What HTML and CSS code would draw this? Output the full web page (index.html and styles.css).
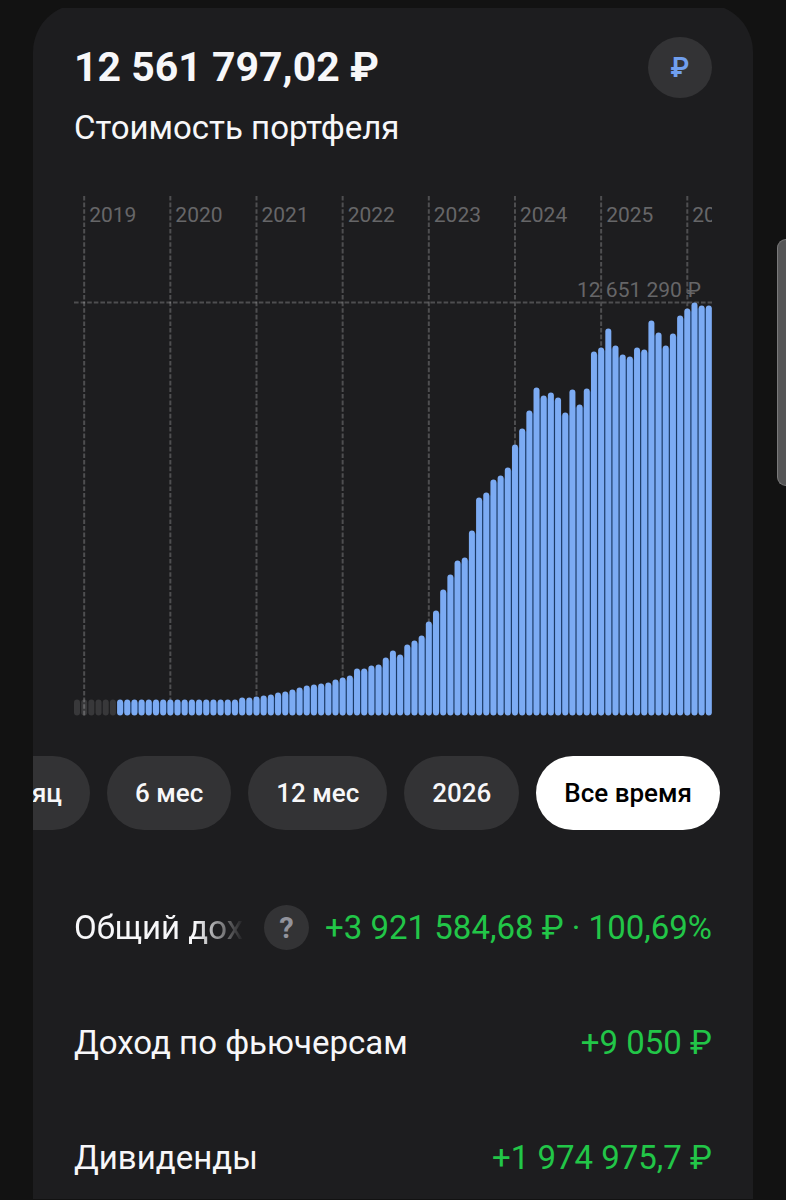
FILE: index.html
```
<!DOCTYPE html>
<html lang="ru">
<head>
    <meta charset="UTF-8">
    <meta name="viewport" content="width=device-width, initial-scale=1.0">
    <title>Стоимость портфеля</title>
    <link rel="stylesheet" href="styles.css">
</head>
<body>
    <div class="page">
        <main class="card">
            <header class="header">
                <h1 class="total">12 561 797,02 ₽</h1>
                <button class="currency" type="button" aria-label="Валюта">₽</button>
            </header>
            <p class="subtitle">Стоимость портфеля</p>

            <svg class="chart" id="chart" viewBox="0 0 638 520" role="img" aria-label="Стоимость портфеля"></svg>

            <div class="periods">
                <button class="period" type="button">Месяц</button>
                <button class="period" type="button">6 мес</button>
                <button class="period" type="button">12 мес</button>
                <button class="period" type="button">2026</button>
                <button class="period active" type="button">Все время</button>
            </div>

            <dl class="stats">
                <div class="row">
                    <dt class="label fade">Общий доход</dt>
                    <dd class="value">
                        <button class="help" type="button" aria-label="Подсказка">?</button>
                        <span>+3 921 584,68 ₽ · 100,69%</span>
                    </dd>
                </div>
                <div class="row">
                    <dt class="label">Доход по фьючерсам</dt>
                    <dd class="value">+9 050 ₽</dd>
                </div>
                <div class="row">
                    <dt class="label">Дивиденды</dt>
                    <dd class="value">+1 974 975,7 ₽</dd>
                </div>
            </dl>
        </main>
    </div>
    <div class="edge-handle"></div>
    <script src="chart.js"></script>
</body>
</html>
```
FILE: styles.css
```
* {
    box-sizing: border-box;
}
body {
    margin: 0;
    background-color: #121212;
    color: #f7f7f9;
    font-family: Roboto, Arial, sans-serif;
}
button {
    border: none;
    padding: 0;
    font-family: inherit;
    cursor: pointer;
}
.page {
    margin: 8px 33px 0;
    overflow: hidden;
}
.card {
    margin-top: -4px;
    padding: 33px 41px 19px;
    background-color: #1d1d1f;
    border-radius: 48px 48px 0 0;
}
.header {
    display: flex;
    justify-content: space-between;
    align-items: center;
}
.total {
    margin: 0;
    font-size: 41px;
    line-height: 61px;
    font-weight: 700;
    white-space: nowrap;
}
.currency {
    width: 64px;
    height: 61px;
    border-radius: 50%;
    background-color: #333335;
    color: #709fee;
    font-size: 27px;
    font-weight: 600;
}
.subtitle {
    margin: 10px 0 48px;
    font-size: 33px;
    line-height: 40px;
}

/* chart */
.chart {
    display: block;
    width: 100%;
    height: auto;
    overflow: hidden;
}
.bar {
    fill: #7cabf3;
}
.bar.empty {
    fill: #38383a;
}
.gap-fill {
    fill: #1b3a66;
}
.grid-line {
    stroke: #fff;
    stroke-opacity: 0.22;
    stroke-width: 2;
    stroke-dasharray: 4.6 2;
}
.chart-text {
    fill: #666668;
    font-size: 21px;
}
.chart-max {
    text-anchor: end;
}

.periods {
    display: flex;
    justify-content: flex-end;
    gap: 17px;
    margin: 40px -41px 0;
    padding-right: 33px;
    overflow: hidden;
}
.period {
    flex: none;
    height: 74px;
    padding: 0 28px;
    border-radius: 37px;
    background-color: #333335;
    color: #f7f7f9;
    font-size: 26px;
    font-weight: 500;
}
.period.active {
    background-color: #fff;
    color: #000;
}

.stats {
    display: flex;
    flex-direction: column;
    gap: 70px;
    margin: 75px 0 0;
}
.row {
    display: flex;
    justify-content: space-between;
    align-items: center;
    gap: 20px;
    height: 45px;
    font-size: 33px;
    line-height: 45px;
    white-space: nowrap;
}
.label {
    min-width: 0;
    overflow: hidden;
}
.label.fade {
    flex: 1;
    mask-image: linear-gradient(to right, #000 calc(100% - 48px), transparent);
}
.value {
    display: flex;
    align-items: center;
    gap: 16px;
    margin: 0;
    color: #22c648;
}
.help {
    width: 45px;
    height: 45px;
    border-radius: 50%;
    background-color: #333335;
    color: #92939c;
    font-size: 29px;
    font-weight: 700;
}

.edge-handle {
    position: absolute;
    top: 239px;
    right: 0;
    width: 9px;
    height: 247px;
    border: 1px solid #7a7a7b;
    border-right: none;
    border-radius: 9px 0 0 9px;
    background-color: #555556;
}
```
FILE: chart.js
```
const chart = document.getElementById('chart');

const STEP = 7.18;
const BAR_WIDTH = 6;
const BOTTOM = 519.5;
const MAX_LINE = 106;

// months before the first deposit
const EMPTY_MONTHS = 6;

// bar heights by month, starting from December 2018
const heights = [
    16, 16, 16, 16, 16, 16, 16, 16, 16, 16, 16, 16, 16,
    16, 16, 16, 16, 16, 16, 16, 16, 16, 16, 18, 18,
    19, 20, 21, 23, 24, 26, 28, 30, 31, 32, 33, 36,
    38, 40, 47, 47, 50, 51, 58, 65, 61, 71, 75, 80,
    94, 105, 126, 141, 155, 158, 185, 218, 223, 236, 240, 248,
    271, 287, 305, 328, 320, 323, 318, 303, 326, 311, 327, 364,
    368, 387, 370, 361, 359, 368, 366, 395, 383, 370, 382, 400,
    407, 413, 410, 410
];

const years = [2019, 2020, 2021, 2022, 2023, 2024, 2025, 2026];

function add(name, attrs, text) {
    const el = document.createElementNS('http://www.w3.org/2000/svg', name);
    for (const key in attrs) {
        el.setAttribute(key, attrs[key]);
    }
    if (text) {
        el.textContent = text;
    }
    chart.appendChild(el);
}

function addBar(i, className) {
    add('rect', {
        class: className,
        x: i * STEP,
        y: BOTTOM - heights[i],
        width: BAR_WIDTH,
        height: heights[i],
        rx: 3
    });
}

for (let i = 0; i < EMPTY_MONTHS; i++) {
    addBar(i, 'bar empty');
}

years.forEach((year, n) => {
    const x = (1 + n * 12) * STEP + BAR_WIDTH / 2;
    add('line', { class: 'grid-line', x1: x, y1: 0, x2: x, y2: BOTTOM });
    add('text', { class: 'chart-text', x: x + 5, y: 26 }, String(year));
});
add('line', { class: 'grid-line', x1: 0, y1: MAX_LINE + 0.5, x2: 638, y2: MAX_LINE + 0.5 });
add('text', { class: 'chart-text chart-max', x: 627, y: 101 }, '12 651 290 ₽');

// dark strips between neighbouring bars
for (let i = EMPTY_MONTHS + 1; i < heights.length; i++) {
    const h = Math.min(heights[i], heights[i - 1]) - 4;
    add('rect', { class: 'gap-fill', x: i * STEP - 2, y: BOTTOM - h - 1, width: 3, height: h - 2 });
}
for (let i = EMPTY_MONTHS; i < heights.length; i++) {
    addBar(i, 'bar');
}
```
